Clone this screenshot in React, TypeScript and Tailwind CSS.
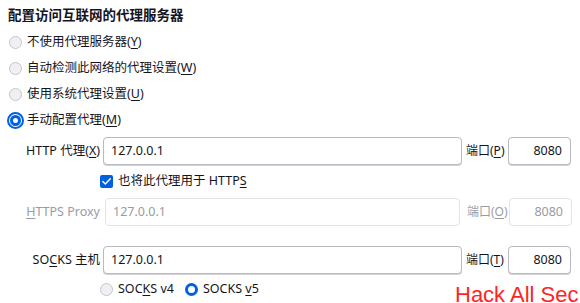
import React from "react";

const FONT = '"Noto Sans", "Noto Sans CJK SC", sans-serif';

function Radio({ checked, focus }: { checked?: boolean; focus?: boolean }) {
  if (checked && focus) {
    return (
      <span className="flex h-[17px] w-[17px] items-center justify-center rounded-full border-[2px] border-[#0061e0] bg-white">
        <span className="flex h-[11px] w-[11px] items-center justify-center rounded-full border-[3px] border-[#0061e0] bg-white" />
      </span>
    );
  }
  if (checked) {
    return (
      <span className="flex h-[13px] w-[13px] items-center justify-center rounded-full border-[3.5px] border-[#0061e0] bg-white" />
    );
  }
  return <span className="block h-[13px] w-[13px] rounded-full border border-[#c4c4cc] bg-[#f0f0f4]" />;
}

function RadioRow({ label, k, checked, focus }: { label: string; k: string; checked?: boolean; focus?: boolean }) {
  return (
    <div className="flex h-[26px] items-center">
      <div className={focus ? "ml-[0px] w-[20px] flex items-center" : "ml-[2px] w-[18px] flex items-center"}>
        <Radio checked={checked} focus={focus} />
      </div>
      <span className="text-[12.5px] text-[#15141a]">
        {label}(<u className="underline-offset-2">{k}</u>)
      </span>
    </div>
  );
}

function FieldRow({
  label,
  portLabel,
  disabled,
}: {
  label: React.ReactNode;
  portLabel: React.ReactNode;
  disabled?: boolean;
}) {
  const txt = disabled ? "text-[#9b9ba3]" : "text-[#15141a]";
  const border = disabled ? "border-[#e3e3e8]" : "border-[#b9b9c1] shadow-[0_1px_0_#d4d4d8]";
  return (
    <div className="flex h-[28px] items-center">
      <div className={`w-[100px] text-right text-[12.5px] ${txt}`}>{label}</div>
      <div className={disabled ? "ml-[5px] mr-[3px] w-[355px]" : "ml-[3px] w-[359px]"}>
        <div className={`flex h-[28px] items-center rounded-[4px] border ${border} bg-white pl-[7px] text-[12.5px] ${txt}`}>
          127.0.0.1
        </div>
      </div>
      <div className={`w-[46px] pl-[4px] text-[12px] ${txt}`}>{portLabel}</div>
      <div className={`flex h-[28px] w-[63px] items-center justify-end rounded-[4px] border ${border} bg-white pr-[8px] text-[12.5px] ${txt}`}>
        8080
      </div>
    </div>
  );
}

export default function App() {
  return (
    <div
      className="relative h-[303px] w-[580px] overflow-hidden bg-white text-[#15141a]"
      style={{ fontFamily: FONT }}
    >
      <div className="pl-[8px] pt-[5px]">
        <div className="h-[21px] text-[13.5px] font-bold leading-[21px] text-[#15141a]">配置访问互联网的代理服务器</div>
        <div className="mt-[3px] -ml-[1px]">
          <RadioRow label="不使用代理服务器" k="Y" />
          <RadioRow label="自动检测此网络的代理设置" k="W" />
          <RadioRow label="使用系统代理设置" k="U" />
          <RadioRow label="手动配置代理" k="M" checked focus />
        </div>
      </div>
      <div className="mt-[4px]">
        <FieldRow
          label={
            <>
              HTTP 代理(<u className="underline-offset-2">X</u>)
            </>
          }
          portLabel={
            <>
              端口(<u className="underline-offset-2">P</u>)
            </>
          }
        />
        <div className="flex h-[33px] items-center pl-[100px]">
          <span className="flex h-[13px] w-[13px] items-center justify-center rounded-[2px] bg-[#0061e0]">
            <svg width="11" height="11" viewBox="0 0 11 11" fill="none">
              <path d="M1.8 5.6 L4.3 8.1 L9.3 2.8" stroke="white" strokeWidth="1.4" strokeLinecap="round" strokeLinejoin="round" />
            </svg>
          </span>
          <span className="ml-[5px] text-[12.5px]">
            也将此代理用于 HTTP<u className="underline-offset-2">S</u>
          </span>
        </div>
        <FieldRow
          disabled
          label={
            <>
              <u className="underline-offset-2">H</u>TTPS Proxy
            </>
          }
          portLabel={
            <>
              端口(<u className="underline-offset-2">O</u>)
            </>
          }
        />
        <div className="mt-[20px]">
          <FieldRow
            label={
              <>
                SO<u className="underline-offset-2">C</u>KS 主机
              </>
            }
            portLabel={
              <>
                端口(<u className="underline-offset-2">T</u>)
              </>
            }
          />
        </div>
        <div className="mt-[8px] flex h-[15px] items-center pl-[100px] text-[12.5px]">
          <Radio />
          <span className="ml-[5px]">
            SOC<u className="underline-offset-2">K</u>S v4
          </span>
          <span className="ml-[11px]">
            <Radio checked />
          </span>
          <span className="ml-[5px]">
            SOCKS <u className="underline-offset-2">v</u>5
          </span>
        </div>
      </div>
      <div
        className="absolute left-[455px] top-[282px] text-[22px] leading-[26px] text-[#ff2424]"
        style={{ fontFamily: '"Liberation Sans", sans-serif' }}
      >
        Hack All Sec
      </div>
    </div>
  );
}
